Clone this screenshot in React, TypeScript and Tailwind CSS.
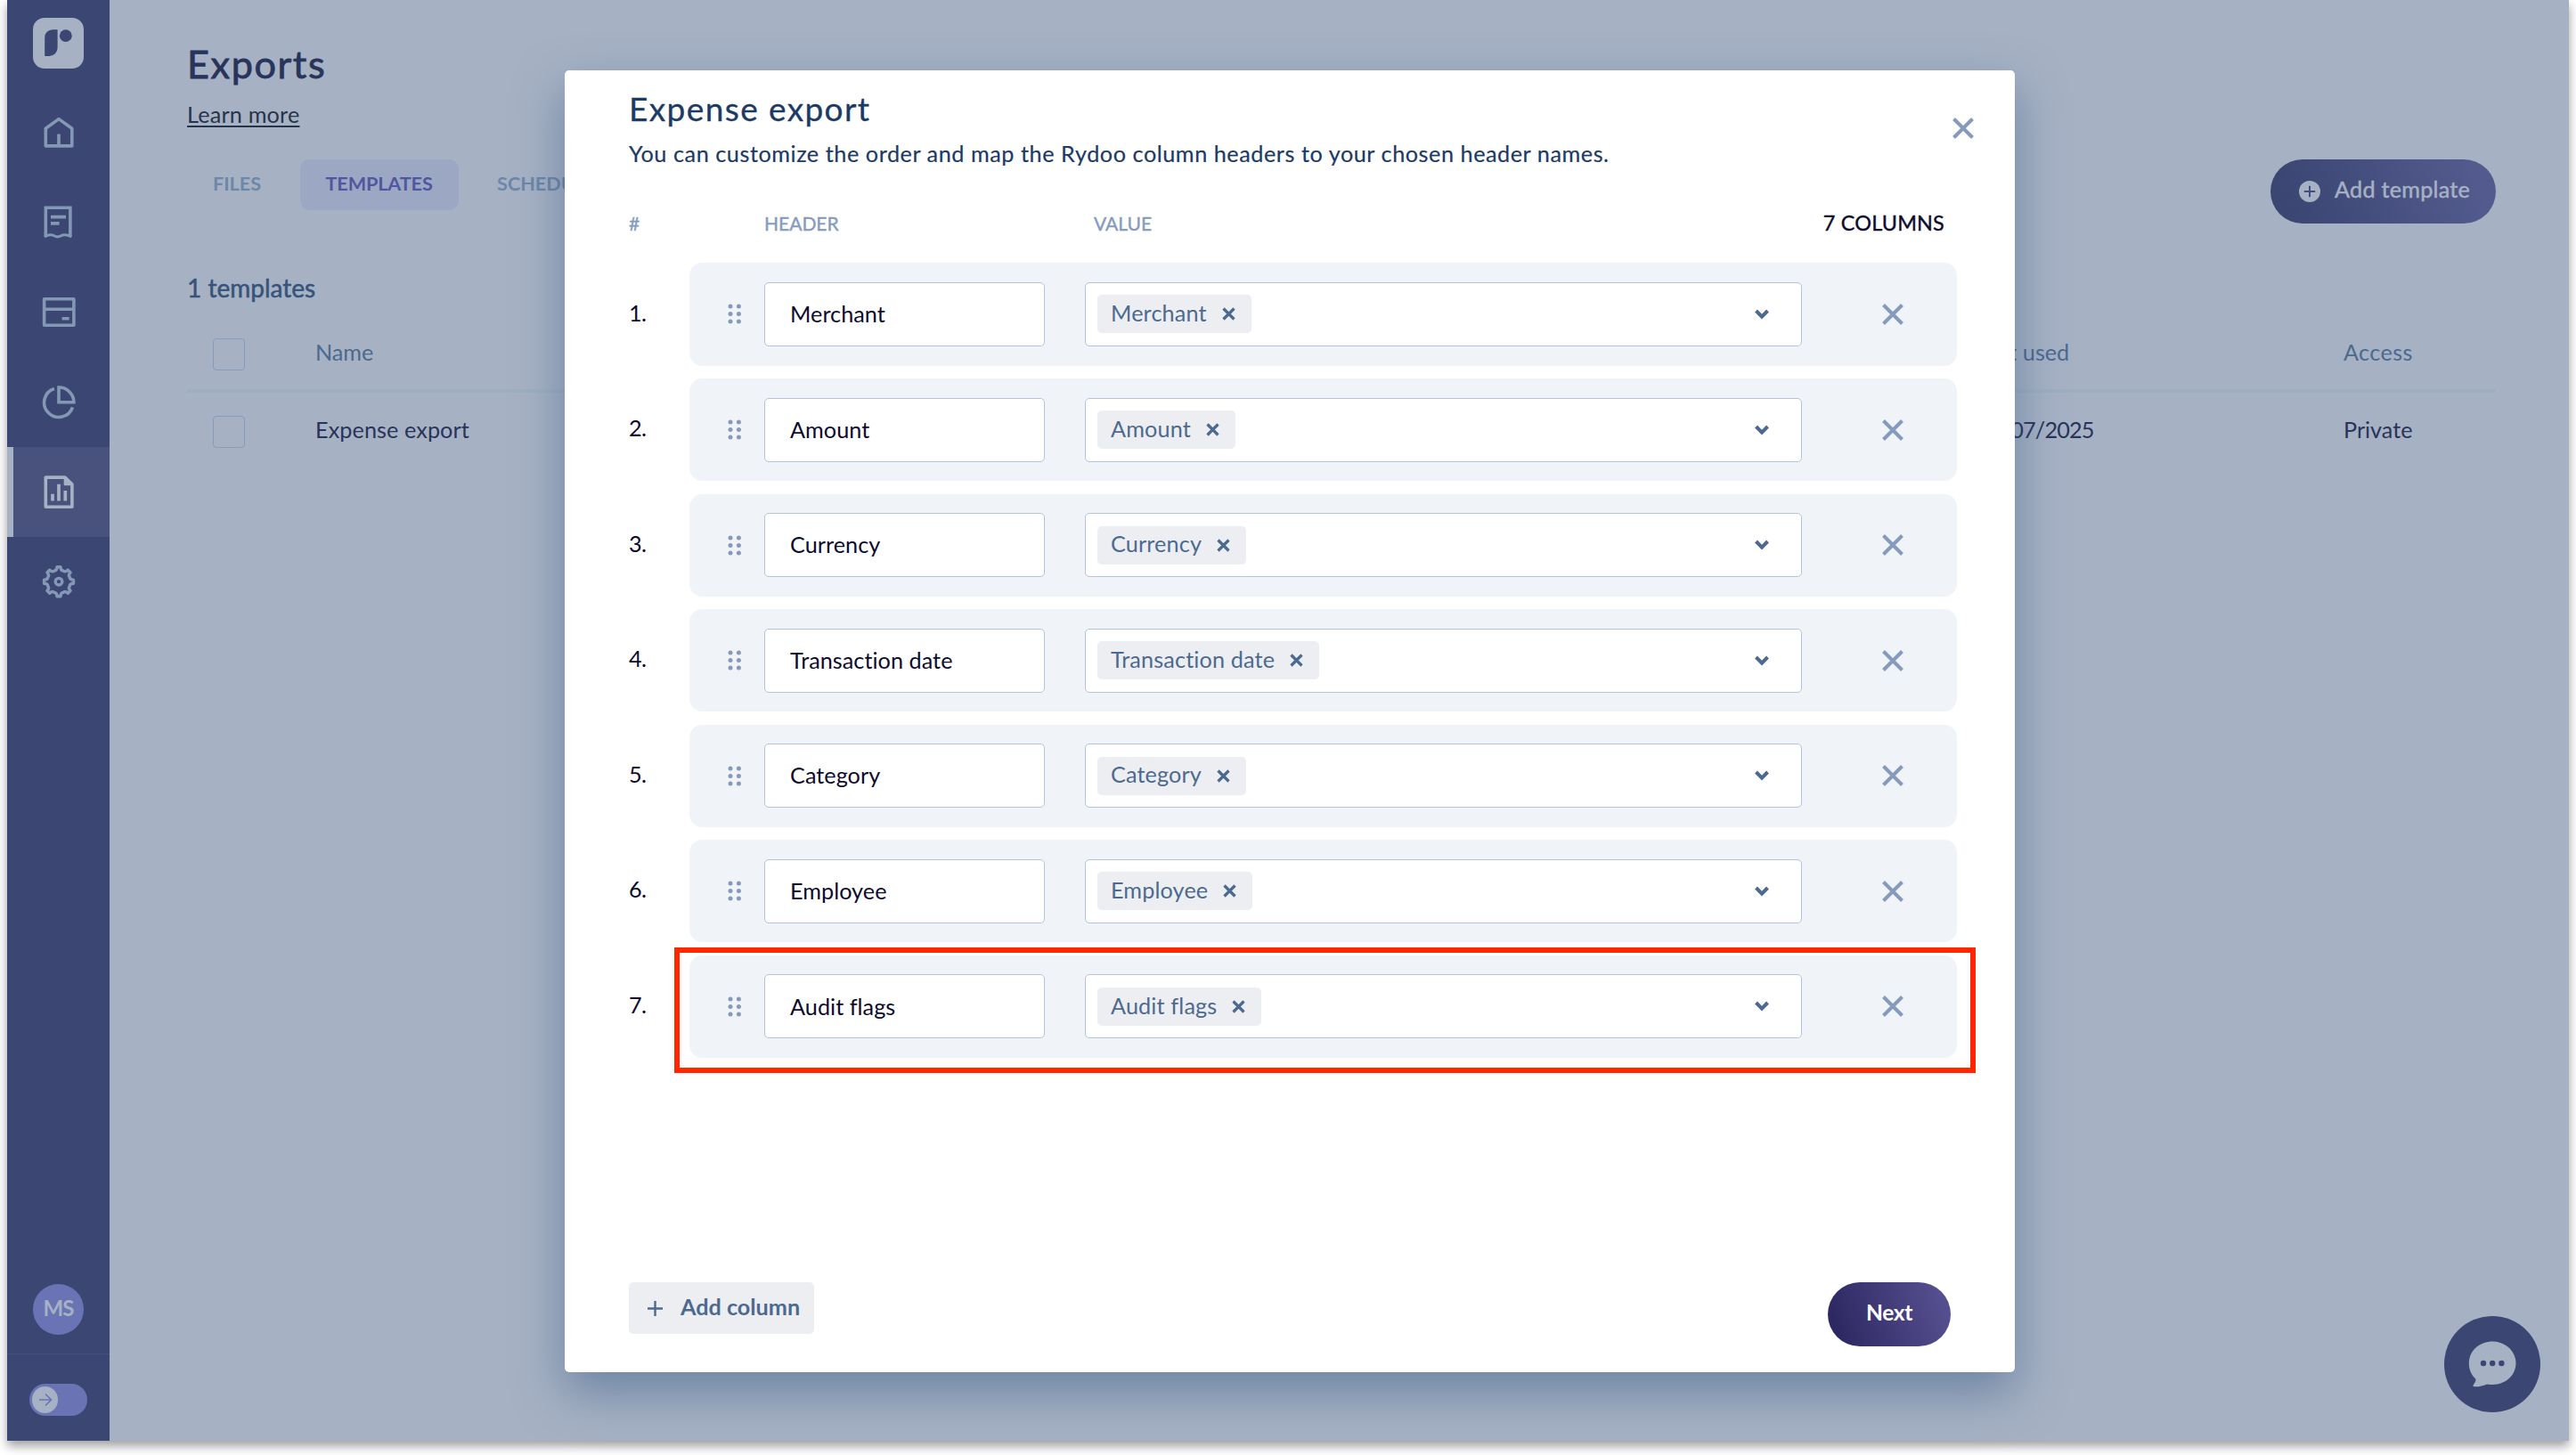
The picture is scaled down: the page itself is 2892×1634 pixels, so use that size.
import React, { useState } from 'react';

const initialColumns = [
  'Merchant',
  'Amount',
  'Currency',
  'Transaction date',
  'Category',
  'Employee',
  'Audit flags',
];

const tabs = ['FILES', 'TEMPLATES', 'SCHEDULED'];

// Outline of the settings cog: eight teeth joined by concave curves
const gearPath = (() => {
  const point = (deg: number, r: number) => {
    const a = (deg * Math.PI) / 180;
    return `${(20 + r * Math.cos(a)).toFixed(2)} ${(20.2 + r * Math.sin(a)).toFixed(2)}`;
  };
  let d = '';
  for (let i = 0; i < 8; i++) {
    const a = i * 45;
    d += `${i === 0 ? 'M' : 'L'}${point(a - 7, 16.6)} L${point(a + 7, 16.6)} `;
    d += `Q${point(a + 9, 12.6)} ${point(a + 22.5, 13.2)} Q${point(a + 36, 12.6)} ${point(a + 38, 16.6)} `;
  }
  return d + 'Z';
})();

const Icon: React.FC<{ children: React.ReactNode }> = ({ children }) => (
  <svg width="40" height="40" viewBox="0 0 40 40" fill="none" stroke="currentColor" strokeWidth="3.6" strokeLinejoin="round">
    {children}
  </svg>
);

const HomeIcon = () => (
  <Icon>
    <path d="M5.3 15.3 20 4.6l14.8 10.7v19.6H5.3z" />
    <path d="M20 21.6V35" />
  </Icon>
);

const ReceiptIcon = () => (
  <Icon>
    <path d="M5.3 35.6V3.2h27.6v32.4" strokeLinejoin="miter" />
    <path d="M3.9 36C8 33.6 12 33.3 14.8 34.8S19.4 36.4 22 35s7-1.8 12.3 1" strokeWidth="3" />
    <path d="M11 13.6h17M11 20.9h9.6" />
  </Icon>
);

const CardIcon = () => (
  <Icon>
    <path d="M3.6 4.7h33.3v29.6H3.6z" />
    <path d="M3.6 16.3h33.3M23.6 26.8h8" />
  </Icon>
);

const PieIcon = () => (
  <Icon>
    <path d="M20 3v16.8h16.9A16.9 16.9 0 0 0 20 3z" strokeLinejoin="miter" />
    <path d="M14.9 4.5a16.4 16.4 0 1 0 20.6 20.9" />
  </Icon>
);

const ReportIcon = () => (
  <Icon>
    <path d="M5.3 3.1h21.6l8 7.6v25.6H5.3z" />
    <path d="M26.9 3.1v8h8z" fill="currentColor" strokeWidth="2.4" />
    <path d="M13 21.7v7.8M20 10.7v18.8M27.3 18v11.5" strokeWidth="3.7" />
  </Icon>
);

const GearIcon = () => (
  <Icon>
    <path d={gearPath} strokeWidth="3.4" />
    <circle cx="20" cy="20.2" r="3.8" strokeWidth="3.4" />
  </Icon>
);

const CloseIcon: React.FC<{ size: number; stroke: number }> = ({ size, stroke }) => (
  <svg width={size} height={size} viewBox={`0 0 ${size} ${size}`} fill="none" stroke="currentColor" strokeWidth={stroke}>
    <path d={`M1.5 1.5 ${size - 1.5} ${size - 1.5}M${size - 1.5} 1.5 1.5 ${size - 1.5}`} />
  </svg>
);

const navItems = [
  { id: 'home', icon: <HomeIcon /> },
  { id: 'expenses', icon: <ReceiptIcon /> },
  { id: 'cards', icon: <CardIcon /> },
  { id: 'insights', icon: <PieIcon /> },
  { id: 'exports', icon: <ReportIcon /> },
  { id: 'settings', icon: <GearIcon /> },
];

const Sidebar: React.FC = () => (
  <aside className="flex w-[115px] shrink-0 flex-col items-center bg-[#3b4673]">
    <svg className="mt-5 shrink-0" width="57" height="57" viewBox="0 0 57 57">
      <rect width="57" height="57" rx="13" fill="#a6b1c4" />
      <path d="M13.2 22a8.8 8.8 0 0 1 8.8-8.8h5.6v20.6a9.2 9.2 0 0 1-9.2 9.2h-5.2z" fill="#3b4673" />
      <circle cx="36.8" cy="20.2" r="6.9" fill="#3b4673" />
    </svg>
    <nav className="mt-[22px] flex w-full flex-col">
      {navItems.map((item) => (
        <button
          key={item.id}
          className={`flex h-[100.8px] w-full items-center justify-center ${
            item.id === 'exports'
              ? 'border-l-[7px] border-[#a6b1c4] bg-[#49527c] pr-[7px] text-[#a6b1c4]'
              : 'text-[#8398b4]'
          }`}
        >
          {item.icon}
        </button>
      ))}
    </nav>
    <div className="mt-auto flex h-[57px] w-[57px] items-center justify-center rounded-full bg-[#6a74b5] pb-[3px] text-[24px] font-bold tracking-[-0.8px] text-[#a6b1c4]">
      MS
    </div>
    <div className="mt-[21px] flex h-[98px] w-full items-center justify-center border-t border-[#454f7f] pt-[5px]">
      <div className="flex h-9 w-[65px] items-center rounded-full bg-[#6a74b5] pl-[3px]">
        <div className="flex h-[30px] w-[29px] items-center justify-center rounded-full bg-[#a6b1c4]">
          <svg width="16" height="16" viewBox="0 0 16 16" fill="none" stroke="#6a74b5" strokeWidth="1.6">
            <path d="M1 8h13.5M8 1.5 14.5 8 8 14.5" />
          </svg>
        </div>
      </div>
    </div>
  </aside>
);

const Checkbox = () => <span className="block h-9 w-9 rounded-[4px] border border-[#869cb9]" />;

const ExportsPage: React.FC = () => (
  <main className="min-w-0 flex-1 bg-[#a6b1c4] pt-[44px] pr-[82px] pl-[87px]">
    <h1 className="text-[43.2px] leading-[54px] tracking-[1.6px] text-[#28345a] [-webkit-text-stroke:0.8px_#28345a]">Exports</h1>
    <a className="mt-3 block w-fit text-[25.2px] leading-9 tracking-[0.2px] text-[#26344a] underline decoration-2 underline-offset-[3px]">
      Learn more
    </a>
    <div className="mt-[33px] flex h-[72px] items-start justify-between">
      <div className="flex text-[21.6px] font-bold">
        {tabs.map((tab) => (
          <button
            key={tab}
            className={`mr-[14.4px] h-[57px] rounded-[11px] px-[29px] pb-[2px] ${
              tab === 'TEMPLATES' ? 'bg-[#9ca7c4] tracking-[-0.1px] text-[#5156a0]' : 'text-[#6c87a8]'
            }`}
          >
            {tab}
          </button>
        ))}
      </div>
      <button className="flex h-[72px] w-[253px] items-center rounded-full bg-linear-[70deg] from-[#3b4673] from-10% to-[#535b8e] to-90% pl-8 text-[#a6b1c4]">
        <svg width="24" height="24" viewBox="0 0 24 24">
          <circle cx="12" cy="12" r="12" fill="#a6b1c4" />
          <path d="M12 5.8v12.4M5.8 12h12.4" stroke="#434d7b" strokeWidth="2" />
        </svg>
        <span className="ml-4 pb-[4px] text-[25.2px] tracking-[0.25px] [-webkit-text-stroke:0.5px_#a6b1c4]">Add template</span>
      </button>
    </div>
    <h2 className="mt-[54px] text-[28px] leading-9 text-[#36537a] [-webkit-text-stroke:0.5px_#36537a]">1 templates</h2>
    <div className="mt-[18px] grid h-[82px] grid-cols-[144px_1865px_412px_1fr] items-center border-b-4 border-[#9fafc1] text-[25.2px] leading-9 text-[#4c698e]">
      <span className="pl-[29px]"><Checkbox /></span>
      <span className="pb-[7px]">Name</span>
      <span className="pb-[7px]">Last used</span>
      <span className="pb-[7px] tracking-[0.4px]">Access</span>
    </div>
    <div className="grid h-[88px] grid-cols-[144px_1865px_412px_1fr] items-center text-[25.2px] leading-9 text-[#28345a]">
      <span className="pl-[29px]"><Checkbox /></span>
      <span className="pb-[7px] tracking-[0.1px]">Expense export</span>
      <span className="pb-[7px] tracking-[-0.8px]">31/07/2025</span>
      <span className="pb-[7px]">Private</span>
    </div>
  </main>
);

const DragHandle = () => (
  <svg width="15" height="23" viewBox="0 0 15 23" fill="#849aba">
    {[3, 11.5, 20].map((y) => (
      <React.Fragment key={y}>
        <circle cx="3" cy={y} r="2.5" />
        <circle cx="12.4" cy={y} r="2.5" />
      </React.Fragment>
    ))}
  </svg>
);

interface ColumnRowProps {
  index: number;
  name: string;
  highlighted: boolean;
  onRemove: () => void;
}

const ColumnRow: React.FC<ColumnRowProps> = ({ index, name, highlighted, onRemove }) => (
  <div className="flex items-center">
    <span className="w-[68px] pb-[3px] text-[25.2px] tracking-[-0.5px] text-[#0d0b2e]">{index}.</span>
    <div className="relative flex h-[115.2px] w-[1423px] items-center rounded-[14.4px] bg-[#f0f3f8]">
      <span className="flex w-[84px] pl-[43px]"><DragHandle /></span>
      <div className="flex h-[72px] w-[315px] items-center rounded-[5px] border border-[#b5c3da] bg-white pl-[28px] text-[25.2px] tracking-[0.05px] text-[#0d0b2e]">
        {name}
      </div>
      <div className="ml-[45px] flex h-[72px] w-[805px] items-center justify-between rounded-[5px] border border-[#b5c3da] bg-white pr-[36px] pl-[13px]">
        <span className="flex h-[43px] items-center gap-[17px] rounded-[5px] bg-[#edeef2] pr-[18px] pl-[15px] text-[#4c6a8f]">
          <span className="pb-[2px] text-[25.2px] tracking-[0.15px]">{name}</span>
          <CloseIcon size={15} stroke={3.2} />
        </span>
        <svg width="16" height="12" viewBox="0 0 16 12" fill="none" stroke="#4c6a8f" strokeWidth="4">
          <path d="M1.5 2 8 8.7 14.5 2" />
        </svg>
      </div>
      <button className="ml-[90px] text-[#859bbd]" onClick={onRemove}>
        <CloseIcon size={24} stroke={4} />
      </button>
      {highlighted && (
        <div className="absolute -top-[9px] -right-[21px] -bottom-[17px] -left-[17px] border-[6px] border-[#ff2600]" />
      )}
    </div>
  </div>
);

const ExportModal: React.FC = () => {
  const [columns, setColumns] = useState(initialColumns);

  return (
    <div className="absolute top-[79px] left-[626px] flex h-[1462px] w-[1628px] flex-col rounded-[5px] bg-white pt-4 pl-[72px] shadow-[0_22px_54px_rgba(52,88,128,0.5)]">
      <div className="flex h-[95px] justify-between pr-[46px]">
        <div className="text-[#1c3a66]">
          <h2 className="text-[37px] leading-[54px] tracking-[1.4px] [-webkit-text-stroke:0.3px_#1c3a66]">Expense export</h2>
          <p className="mt-[5px] text-[25.2px] leading-9 tracking-[0.56px] [-webkit-text-stroke:0.2px_#1c3a66]">
            You can customize the order and map the Rydoo column headers to your chosen header names.
          </p>
        </div>
        <button className="mt-[37px] h-6 text-[#859bbd]">
          <CloseIcon size={24} stroke={4} />
        </button>
      </div>

      <div className="mt-[43px] flex h-9 items-center text-[21px] text-[#859bbd] [-webkit-text-stroke:0.4px_#859bbd]">
        <span className="w-[152px]">#</span>
        <span className="w-[370px]">HEADER</span>
        <span>VALUE</span>
        <span className="mr-[79px] ml-auto text-[23.4px] tracking-[0.2px] text-[#0d0b2e] [-webkit-text-stroke:0.4px_#0d0b2e]">
          {columns.length} COLUMNS
        </span>
      </div>

      <div className="mt-[26.4px] flex flex-col gap-[14.4px]">
        {columns.map((name, i) => (
          <ColumnRow
            key={name}
            index={i + 1}
            name={name}
            highlighted={name === 'Audit flags'}
            onRemove={() => setColumns(columns.filter((c) => c !== name))}
          />
        ))}
      </div>

      <div className="mt-auto flex items-start justify-between pr-[72px] pb-[29px]">
        <button className="flex h-[58px] w-[208px] items-center rounded-[5px] bg-[#edeef2] pl-[21px] text-[#4c6a8f]">
          <svg width="17" height="17" viewBox="0 0 17 17" stroke="currentColor" strokeWidth="2.4">
            <path d="M8.5 0v17M0 8.5h17" />
          </svg>
          <span className="ml-5 pb-[3px] text-[25.2px] font-bold">Add column</span>
        </button>
        <button className="h-[72px] w-[138px] rounded-full bg-linear-[70deg] from-[#2e2862] from-10% to-[#554f8f] to-90% pb-[3px] text-[24.5px] font-bold tracking-[-0.3px] text-white">
          Next
        </button>
      </div>
    </div>
  );
};

const ChatButton = () => (
  <button className="absolute right-[32px] bottom-[32px] flex h-[108px] w-[108px] items-center justify-center rounded-full bg-[#3b4673]">
    <svg width="54" height="52" viewBox="0 0 54 52">
      <path
        d="M27.2.5C41.5.5 53.5 11 53.5 24.8S42 49 27.2 49c-2.4 0-4.6-.2-6.2-.6C16.5 50.5 11 51.6 6.6 51.2c-1.2-.1-1.5-1.4-.7-2.3 1.5-1.7 2.7-4 2.6-6.2C3.8 38.5.8 32.5.8 24.8.8 11 12.8.5 27.2.5z"
        fill="#a6b1c4"
      />
      <circle cx="17" cy="25" r="3.2" fill="#3b4673" />
      <circle cx="27.2" cy="25" r="3.2" fill="#3b4673" />
      <circle cx="37.4" cy="25" r="3.2" fill="#3b4673" />
    </svg>
  </button>
);

const App: React.FC = () => (
  <div className="h-[1634px] w-[2892px] overflow-hidden bg-white pl-2 font-['Lato',sans-serif]">
    <div className="relative flex h-[1618px] w-[2876px] shadow-[0_6px_11px_rgba(0,0,0,0.38)]">
      <Sidebar />
      <ExportsPage />
      <ChatButton />
      <ExportModal />
    </div>
  </div>
);

export default App;
